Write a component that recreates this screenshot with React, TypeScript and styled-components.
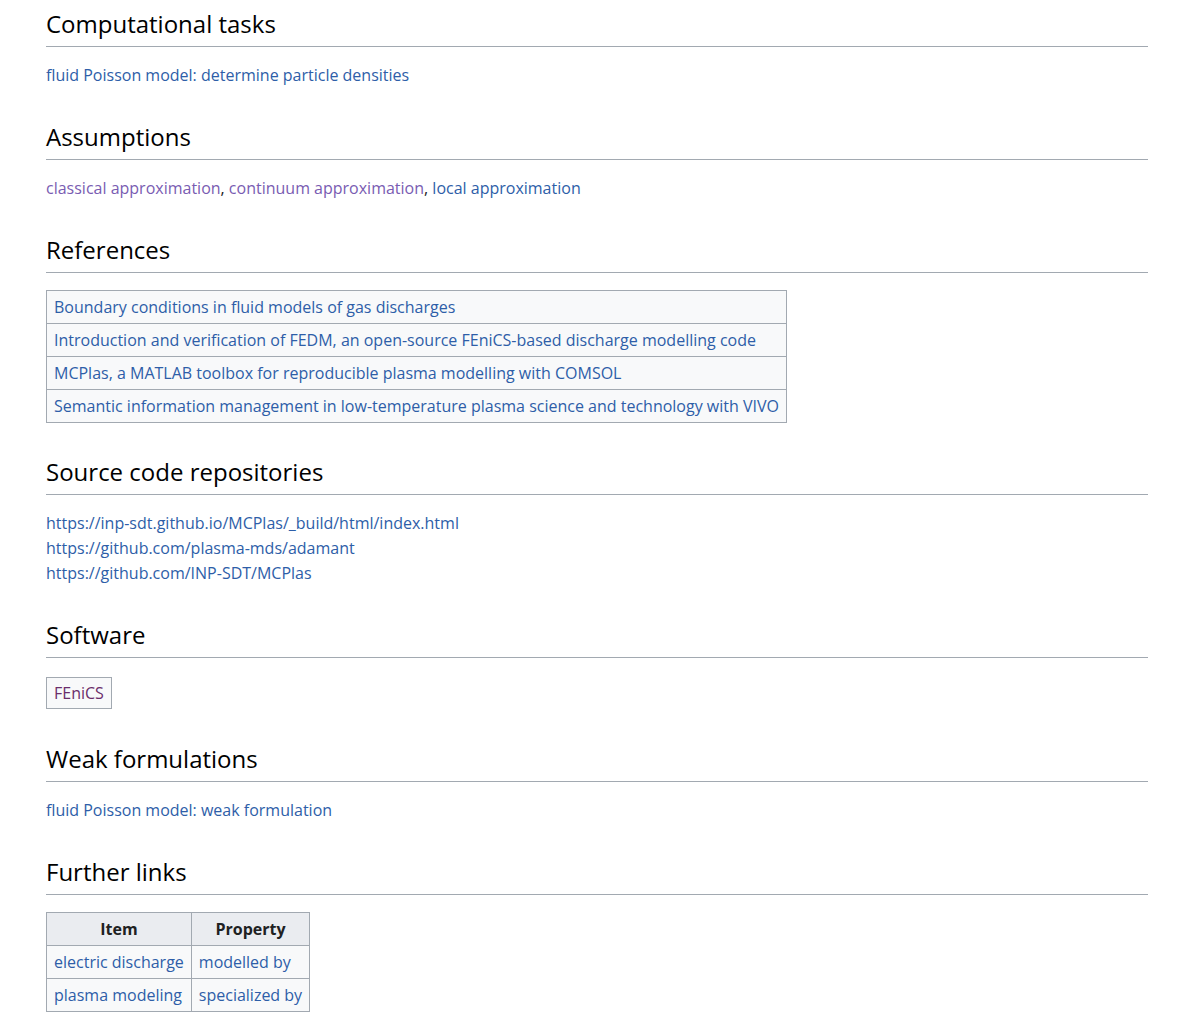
import React from "react";
import styled, { createGlobalStyle } from "styled-components";

const GlobalStyle = createGlobalStyle`
    body {
        margin: 0;
        background: #ffffff;
        color: #202122;
        font-family: "Open Sans", "Noto Sans", sans-serif;
        font-size: 16px;
    }
`;

const Page = styled('div')`
    padding: 9px 32px 0 46px;
`;

const Heading = styled('h2')<{ $first?: boolean }>`
    margin: ${p => (p.$first ? "0" : "34px")} 0 0;
    padding-bottom: 7px;
    border-bottom: 1px solid #a2a9b1;
    font-size: 24px;
    font-weight: 400;
    line-height: 30px;
    color: #000000;
`;

const Para = styled('p')`
    margin: 16px 0 0;
    line-height: 25px;
`;

const LinkList = styled('div')`
    margin-top: 16px;
    display: flex;
    flex-direction: column;
    line-height: 25px;
`;

const Link = styled('a')<{ $visited?: boolean }>`
    color: ${p => (p.$visited ? "#795cb2" : "#2e5ea8")};
    text-decoration: none;
`;

const RefTable = styled('table')`
    margin: 17px 0 1px;
    border-collapse: collapse;
    background: #f8f9fa;

    td {
        border: 1px solid #a2a9b1;
        padding: 4px 7px;
        line-height: 24px;
    }
`;

const Chip = styled('div')`
    margin: 19px 0 1px;
    display: inline-block;
    border: 1px solid #a2a9b1;
    background: #f8f9fa;
    padding: 3px 7px;
    line-height: 24px;

    a {
        color: #6b2d6b;
        text-decoration: none;
    }
`;

const DataTable = styled('table')`
    margin-top: 17px;
    border-collapse: collapse;
    background: #f8f9fa;

    th, td {
        border: 1px solid #a2a9b1;
        padding: 4px 7px;
        line-height: 24px;
    }

    th {
        background: #eaecf0;
        font-weight: 700;
        text-align: center;
        color: #202122;
    }
`;

const references = [
    "Boundary conditions in fluid models of gas discharges",
    "Introduction and verification of FEDM, an open-source FEniCS-based discharge modelling code",
    "MCPlas, a MATLAB toolbox for reproducible plasma modelling with COMSOL",
    "Semantic information management in low-temperature plasma science and technology with VIVO",
];

const repositories = [
    "https://inp-sdt.github.io/MCPlas/_build/html/index.html",
    "https://github.com/plasma-mds/adamant",
    "https://github.com/INP-SDT/MCPlas",
];

const furtherLinks = [
    { item: "electric discharge", property: "modelled by" },
    { item: "plasma modeling", property: "specialized by" },
];

const App = () => (
    <Page>
        <GlobalStyle />

        <Heading $first>Computational tasks</Heading>
        <Para>
            <Link href="#">fluid Poisson model: determine particle densities</Link>
        </Para>

        <Heading>Assumptions</Heading>
        <Para>
            <Link href="#" $visited>classical approximation</Link>,{" "}
            <Link href="#" $visited>continuum approximation</Link>,{" "}
            <Link href="#">local approximation</Link>
        </Para>

        <Heading>References</Heading>
        <RefTable>
            <tbody>
                {references.map(r => (
                    <tr key={r}>
                        <td><Link href="#">{r}</Link></td>
                    </tr>
                ))}
            </tbody>
        </RefTable>

        <Heading>Source code repositories</Heading>
        <LinkList>
            {repositories.map(r => (
                <Link key={r} href="#">{r}</Link>
            ))}
        </LinkList>

        <Heading>Software</Heading>
        <Chip>
            <a href="#">FEniCS</a>
        </Chip>

        <Heading>Weak formulations</Heading>
        <Para>
            <Link href="#">fluid Poisson model: weak formulation</Link>
        </Para>

        <Heading>Further links</Heading>
        <DataTable>
            <thead>
                <tr>
                    <th>Item</th>
                    <th>Property</th>
                </tr>
            </thead>
            <tbody>
                {furtherLinks.map(f => (
                    <tr key={f.item}>
                        <td><Link href="#">{f.item}</Link></td>
                        <td><Link href="#">{f.property}</Link></td>
                    </tr>
                ))}
            </tbody>
        </DataTable>
    </Page>
);

export default App;
